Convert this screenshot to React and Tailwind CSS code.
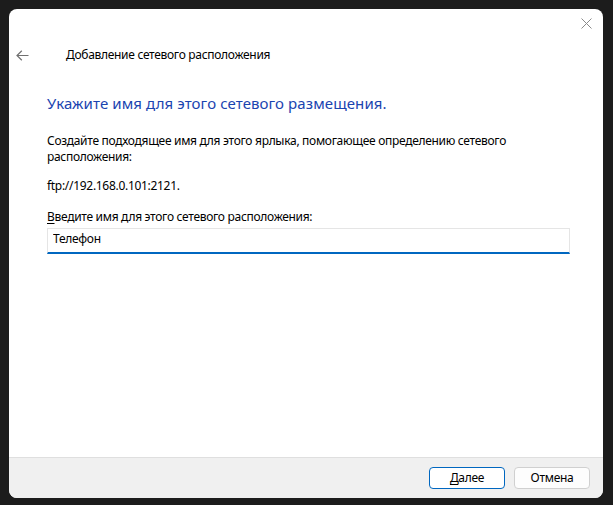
import React from "react";

const BackArrow = () => (
  <svg width="13" height="11" viewBox="0 0 13 11" fill="none" stroke="#707070" strokeWidth="1.2">
    <path d="M12.5 5.5H1M5.8 0.8L1 5.5l4.8 4.7" />
  </svg>
);

const CloseIcon = () => (
  <svg width="11" height="11" viewBox="0 0 11 11" fill="none" stroke="#8a8a8a" strokeWidth="1">
    <path d="M0.5 0.5l10 10M10.5 0.5l-10 10" />
  </svg>
);

export default function App() {
  return (
    <div className="w-[613px] h-[505px] bg-[#1c1c1c] pl-[9px] pt-[9px] font-['Noto_Sans',sans-serif]">
      <div className="w-[594px] h-[489px] bg-white rounded-[8px] overflow-hidden flex flex-col">
        <div className="flex-1 flex flex-col">
          {/* top bar */}
          <div className="h-[28px] flex justify-end pr-[11px]">
            <div className="mt-[9px]">
              <CloseIcon />
            </div>
          </div>

          {/* header */}
          <div className="mt-[10px] flex items-center h-[16px]">
            <div className="ml-[7px] w-[13px] flex items-center">
              <BackArrow />
            </div>
            <span className="ml-[37px] text-[12px] leading-[16px] tracking-[-0.3px] text-black">
              Добавление сетевого расположения
            </span>
          </div>

          <div className="pl-[38px] pr-[32px]">
            <h1 className="mt-[30px] text-[15px] leading-[20px] tracking-[0.1px] text-[#1a44b0] font-normal">
              Укажите имя для этого сетевого размещения.
            </h1>

            <p className="mt-[20px] text-[12px] leading-[16px] tracking-[-0.3px] text-black">
              Создайте подходящее имя для этого ярлыка, помогающее определению сетевого расположения:
            </p>

            <p className="mt-[13px] text-[12px] leading-[16px] tracking-[-0.3px] text-black">
              ftp://192.168.0.101:2121.
            </p>

            <label className="block mt-[15px] text-[12px] leading-[16px] tracking-[-0.3px] text-black">
              <u className="underline-offset-2">В</u>ведите имя для этого сетевого расположения:
            </label>

            <input
              readOnly
              value="Телефон"
              className="mt-[1px] w-[523px] h-[26px] px-[5px] pb-[3px] bg-white border border-[#e5e5e5] border-b-2 border-b-[#0067c0] text-[12px] leading-[16px] tracking-[-0.3px] text-black outline-none"
            />
          </div>
        </div>

        {/* footer */}
        <div className="h-[41px] bg-[#f0f0f0] border-t border-[#dfdfdf] flex justify-end items-start pt-[9px] pr-[13px] gap-[9px]">
          <button className="w-[76px] h-[22px] rounded-[4px] bg-white border border-[#0067c0] text-[12px] leading-[16px] tracking-[-0.3px] text-black">
            <u className="underline-offset-2">Д</u>алее
          </button>
          <button className="w-[76px] h-[22px] rounded-[4px] bg-[#fdfdfd] border border-[#d0d0d0] text-[12px] leading-[16px] tracking-[-0.3px] text-black">
            Отмена
          </button>
        </div>
      </div>
    </div>
  );
}
